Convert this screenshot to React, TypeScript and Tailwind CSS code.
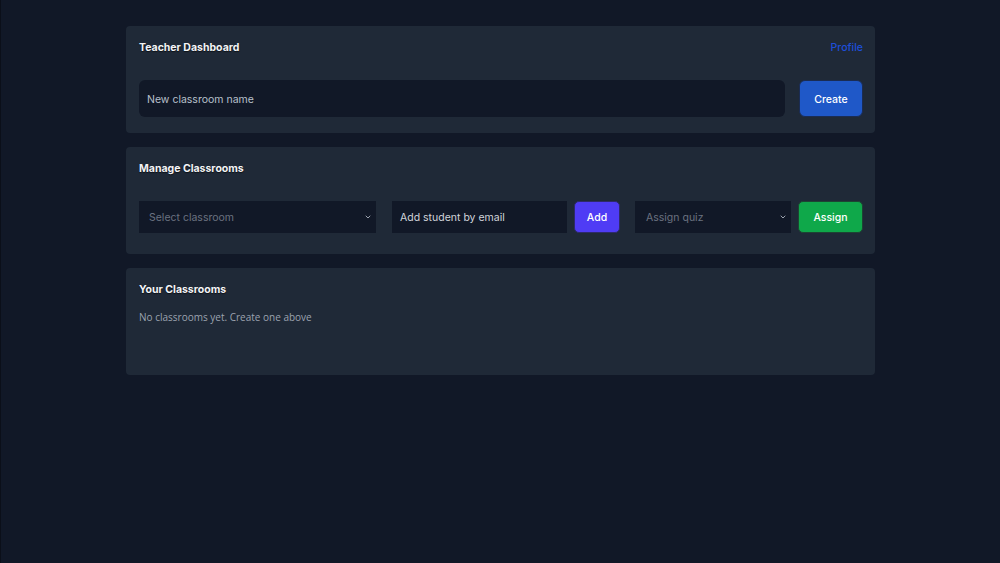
import React from "react";

function Chevron() {
  return (
    <svg
      className="pointer-events-none absolute right-[3px] top-1/2 -translate-y-1/2 h-[10px] w-[10px] text-[#9ca3af]"
      viewBox="0 0 20 20"
      fill="none"
      stroke="currentColor"
      strokeWidth="2"
    >
      <path d="M6 8l4 4 4-4" strokeLinecap="round" strokeLinejoin="round" />
    </svg>
  );
}

export default function App() {
  const font = "font-['Inter','Liberation_Sans',sans-serif]";
  const heading = "text-[10.5px] font-bold text-[#f3f4f6] h-[15px] flex items-center [text-shadow:0_1px_1px_rgba(0,0,0,0.6)]";

  return (
    <div className={`min-h-[563px] bg-[#111827] border-l border-l-[#0b0f19] ${font}`}>
      <div className="w-[749px] mx-auto pt-[26px] flex flex-col gap-[14px]">
        {/* Header card */}
        <div className="bg-[#1f2937] rounded-[4px] pl-[13px] pr-[12px] pt-[14px] h-[107px]">
          <div className="flex justify-between items-center h-[15px]">
            <h1 className={heading}>Teacher Dashboard</h1>
            <a className="text-[10.5px] text-[#1d4ed8] font-medium">Profile</a>
          </div>
          <div className="flex gap-[14px] mt-[25px]">
            <div className="flex-1 h-[37px] bg-[#111827] rounded-[6px] flex items-center px-[8px] pt-[2px] text-[10.5px] text-[#b8c0cc]">
              New classroom name
            </div>
            <button className="w-[64px] h-[37px] bg-[#1f58c8] rounded-[6px] border border-[#1a2c54] text-white text-[10.5px] font-medium pt-[2px]">
              Create
            </button>
          </div>
        </div>

        {/* Manage card */}
        <div className="bg-[#1f2937] rounded-[4px] pl-[13px] pr-[12px] pt-[14px] h-[107px]">
          <h2 className={heading}>Manage Classrooms</h2>
          <div className="flex items-center mt-[25px] h-[32px]">
            <div className="relative w-[237px] h-[32px] bg-[#111827] flex items-center px-[10px] pt-[2px] text-[10.5px] text-[#6b7280]">
              Select classroom
              <Chevron />
            </div>
            <div className="ml-[16px] w-[175px] h-[32px] bg-[#111827] flex items-center px-[8px] pt-[2px] text-[10.5px] text-[#d1d5db]">
              Add student by email
            </div>
            <button className="ml-[7px] w-[46px] h-[32px] bg-[#4f3cf5] rounded-[5px] border border-[#2e2a6a] text-white text-[10.5px] font-medium pt-[1px]">
              Add
            </button>
            <div className="relative ml-[15px] w-[156px] h-[32px] bg-[#111827] flex items-center px-[11px] pt-[2px] text-[10.5px] text-[#6b7280]">
              Assign quiz
              <Chevron />
            </div>
            <button className="ml-[7px] w-[65px] h-[32px] bg-[#0fa84a] rounded-[5px] border border-[#1d4433] text-white text-[10.5px] font-medium pt-[1px]">
              Assign
            </button>
          </div>
        </div>

        {/* Classrooms card */}
        <div className="bg-[#1f2937] rounded-[4px] pl-[13px] pr-[12px] pt-[14px] h-[107px]">
          <h2 className={heading}>Your Classrooms</h2>
          <p className="mt-[13px] text-[10px] text-[#9ca3af] font-['Open_Sans','Noto_Sans',sans-serif]">
            No classrooms yet. Create one above
          </p>
        </div>
      </div>
    </div>
  );
}
